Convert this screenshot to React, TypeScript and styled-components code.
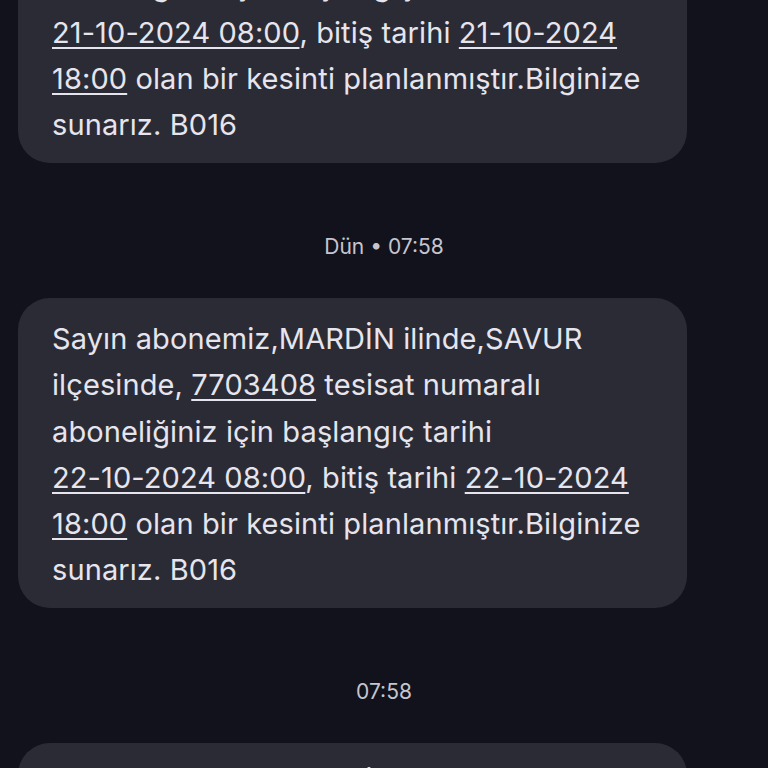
import { FC } from 'react';
import styled, { createGlobalStyle } from 'styled-components';

type Segment = { text: string; link?: boolean };

type Message = {
  id: string;
  stamp?: string;
  lines: Segment[][];
};

const buildLines = (day: string): Segment[][] => [
  [{ text: 'Sayın abonemiz,MARDİN ilinde,SAVUR' }],
  [{ text: 'ilçesinde, ' }, { text: '7703408', link: true }, { text: ' tesisat numaralı' }],
  [{ text: 'aboneliğiniz için başlangıç tarihi' }],
  [
    { text: `${day}-10-2024 08:00`, link: true },
    { text: ', bitiş tarihi ' },
    { text: `${day}-10-2024`, link: true },
  ],
  [{ text: '18:00', link: true }, { text: ' olan bir kesinti planlanmıştır.Bilginize' }],
  [{ text: 'sunarız. B016' }],
];

const messages: Message[] = [
  { id: 'm21', lines: buildLines('21') },
  { id: 'm22', stamp: 'Dün • 07:58', lines: buildLines('22') },
  { id: 'm23', stamp: '07:58', lines: buildLines('23') },
];

const App: FC = () => {
  return (
    <>
      <GlobalStyle />
      <Screen>
        <Thread>
          {messages.map((msg) => (
            <Group key={msg.id}>
              {msg.stamp && <Stamp>{msg.stamp}</Stamp>}
              <Bubble>
                {msg.lines.map((line, i) => (
                  <Line key={i}>
                    {line.map((seg, j) =>
                      seg.link ? <Link key={j}>{seg.text}</Link> : <span key={j}>{seg.text}</span>,
                    )}
                  </Line>
                ))}
              </Bubble>
            </Group>
          ))}
        </Thread>
      </Screen>
    </>
  );
};

export default App;

const GlobalStyle = createGlobalStyle`
  html, body {
    margin: 0;
    padding: 0;
    background: #12121c;
  }
`;

const Screen = styled.div`
  height: 768px;
  overflow: hidden;
  background: #12121c;
  font-family: 'Inter', 'Noto Sans', sans-serif;
  color: #e6e5ee;
`;

const Thread = styled.div`
  display: flex;
  flex-direction: column;
  margin-top: -147px;
`;

const Group = styled.div`
  display: flex;
  flex-direction: column;
`;

const Stamp = styled.div`
  text-align: center;
  font-size: 21px;
  line-height: 24px;
  color: #c6c5cf;
  margin: 72px 0 39px;
`;

const Bubble = styled.div`
  margin: 0 81px 0 18px;
  padding: 18px 34px 15px;
  background: #2b2b35;
  border-radius: 32px;
  font-size: 29px;
  line-height: 46.2px;
`;

const Line = styled.div`
  white-space: nowrap;
  letter-spacing: 0.1px;
`;

const Link = styled.span`
  text-decoration: underline;
  text-decoration-thickness: 2px;
  text-underline-offset: 4px;
`;
